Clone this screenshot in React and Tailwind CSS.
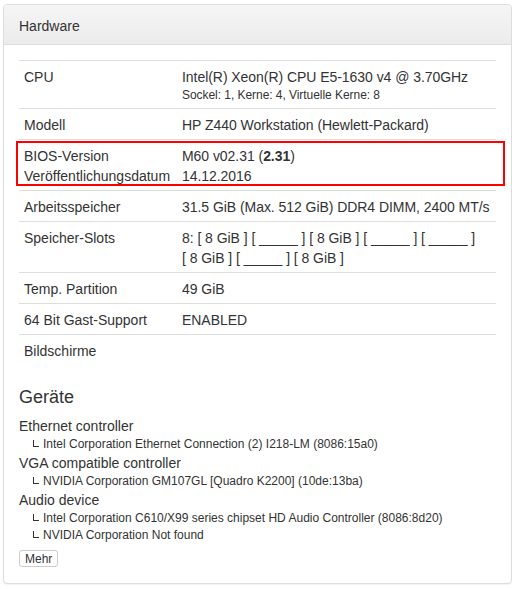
const nb = (s) => s.replace(/ /g, "\u00a0");

export default function App() {
  const slots = ["8 GiB", "_____", "8 GiB", "_____", "_____", "8 GiB", "_____", "8 GiB"];

  const rows = [
    { label: "CPU", value: (
      <>
        <div className="leading-5">Intel(R) Xeon(R) CPU E5-1630 v4 @ 3.70GHz</div>
        <div className="text-[12px] leading-[17px]">Sockel: 1, Kerne: 4, Virtuelle Kerne: 8</div>
      </>
    ) },
    { label: "Modell", value: "HP Z440 Workstation (Hewlett-Packard)" },
    { label: (
      <>
        <div>BIOS-Version</div>
        <div>Veröffentlichungsdatum</div>
      </>
    ), value: (
      <>
        <div>M60 v02.31 (<b>2.31</b>)</div>
        <div>14.12.2016</div>
      </>
    ), marked: true },
    { label: "Arbeitsspeicher", value: "31.5 GiB (Max. 512 GiB) DDR4 DIMM, 2400 MT/s" },
    { label: "Speicher-Slots", value: "8: " + slots.map((s) => nb(`[ ${s} ]`)).join(" ") },
    { label: "Temp. Partition", value: "49 GiB" },
    { label: "64 Bit Gast-Support", value: "ENABLED" },
    { label: "Bildschirme", value: "" },
  ];

  const devices = [
    { name: "Ethernet controller", items: ["Intel Corporation Ethernet Connection (2) I218-LM (8086:15a0)"] },
    { name: "VGA compatible controller", items: ["NVIDIA Corporation GM107GL [Quadro K2200] (10de:13ba)"] },
    { name: "Audio device", items: ["Intel Corporation C610/X99 series chipset HD Audio Controller (8086:8d20)", "NVIDIA Corporation Not found"] },
  ];

  return (
    <div className="min-h-screen bg-white pt-[4px] pl-[3px] text-[14px] text-[#333] font-['Liberation_Sans',Arial,sans-serif]">
      <div className="w-[509px] rounded-[4px] border border-[#ddd] bg-white shadow-[0_1px_1px_rgba(0,0,0,0.05)]">
        {/* Heading */}
        <div className="h-[40px] px-[15px] pt-[3px] flex items-center rounded-t-[3px] border-b border-[#ddd] bg-gradient-to-b from-[#f5f5f5] to-[#ececec]">
          Hardware
        </div>

        {/* Body */}
        <div className="px-[15px] pt-[15px] pb-[16px]">
          <div className="flex flex-col">
            {rows.map((r, i) => (
              <div key={i} className="relative grid grid-cols-[158px_1fr] border-t border-[#ddd] leading-5">
                <div className="px-[5px] pt-[6px] pb-[4px]">{r.label}</div>
                <div className="pt-[6px] pb-[4px] pl-[5px] tracking-[-0.05px]">{r.value}</div>
                {r.marked && (
                  <div className="pointer-events-none absolute top-[1px] bottom-[4px] -left-[3px] -right-[9px] border-2 border-[#f00]" />
                )}
              </div>
            ))}
          </div>

          <h4 className="mt-[21px] mb-[8px] pt-[1px] text-[18px] leading-5">Geräte</h4>

          <div>
            {devices.map((d) => (
              <div key={d.name}>
                <div className="leading-5 pt-[1px] -mb-[1px]">{d.name}</div>
                {d.items.map((it) => (
                  <div key={it} className="pl-[14px] text-[12px] leading-[17px] pt-[1px] -mb-[1px]">
                    <span className="inline-block w-[6px] h-[7px] mr-[4px] border-l border-b border-[#333] align-[1px]" />
                    {it}
                  </div>
                ))}
              </div>
            ))}
          </div>

          <button className="mt-[7px] h-[17px] px-[5px] flex items-center rounded-[3px] border border-[#ccc] bg-white text-[12px] text-[#333]">
            Mehr
          </button>
        </div>
      </div>
    </div>
  );
}
